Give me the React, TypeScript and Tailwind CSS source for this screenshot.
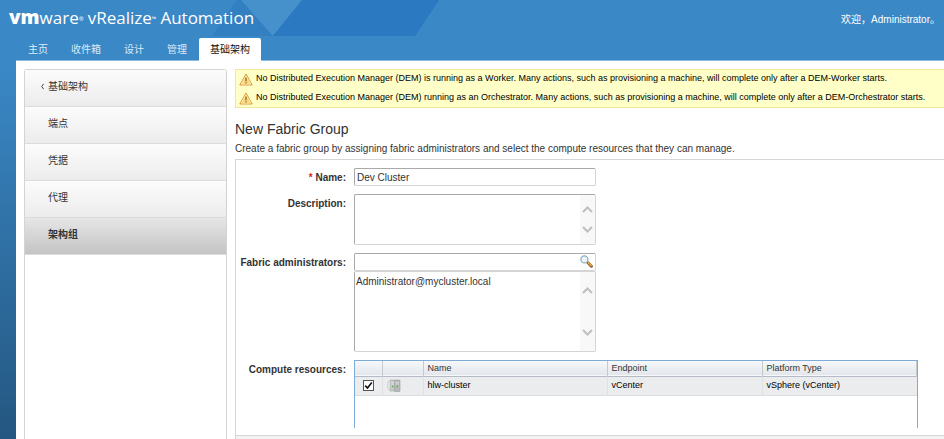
import React from "react";

const tabs = ["主页", "收件箱", "设计", "管理", "基础架构"];

const sideItems = ["基础架构", "端点", "凭据", "代理", "架构组"];

const warnings = [
  "No Distributed Execution Manager (DEM) is running as a Worker. Many actions, such as provisioning a machine, will complete only after a DEM-Worker starts.",
  "No Distributed Execution Manager (DEM) running as an Orchestrator. Many actions, such as provisioning a machine, will complete only after a DEM-Orchestrator starts.",
];

const field =
  "block w-full rounded-[2px] border border-[#d4d4d4] border-l-[#a9a9a9] bg-white text-[#333] outline-none";

function WarningIcon() {
  return (
    <svg className="h-[13px] w-[14px] shrink-0" viewBox="0 0 14 13" aria-hidden="true">
      <path d="M7 1 13.2 12H.8Z" fill="#fbd77c" stroke="#dd9a3c" strokeLinejoin="round" />
      <path d="M7 2.8 11.8 11H2.2Z" fill="none" stroke="#fff0c0" strokeWidth=".7" />
      <path d="M7 4.6v3.6M7 9.2v1.2" stroke="#8a5f1c" strokeWidth="1.2" />
    </svg>
  );
}

function SearchIcon() {
  return (
    <svg className="h-[13px] w-[13px]" viewBox="0 0 13 13" aria-hidden="true">
      <path d="m8 7.8 3.4 3.4" stroke="#7a5a35" strokeWidth="3" strokeLinecap="round" />
      <path d="m7.9 7.3 3.7 3.5" stroke="#f0a13c" strokeWidth="1.6" />
      <circle cx="4.4" cy="4.4" r="3.5" fill="#eaf6fb" stroke="#8caebc" strokeWidth="1.3" />
    </svg>
  );
}

function ClusterIcon() {
  return (
    <svg className="block h-[13px] w-[14px]" viewBox="0 0 14 13" aria-hidden="true">
      <path d="M4 .8C1.5 1.5.8 3.5.8 6.5s.8 5 3.2 5.7" fill="#f6f6f6" stroke="#c4c6c8" />
      <rect x="3" y="1" width="5" height="11" rx="1" fill="#c6c8ca" stroke="#a9abad" strokeWidth=".6" />
      <rect x="7.5" y="1" width="5.5" height="11.5" rx=".6" fill="#b6b8ba" stroke="#9b9d9f" strokeWidth=".6" />
      <path d="M4 3.5h3M4 5h3M8.5 3.5H12M8.5 5H12" stroke="#e2e4e5" strokeWidth=".7" />
      <path d="M5 7.5h1.5M9.5 7.5H11" stroke="#55b94a" strokeWidth="1.4" />
    </svg>
  );
}

function Chevron({ d }: { d: string }) {
  return (
    <svg className="h-[7px] w-[11px]" viewBox="0 0 11 7" aria-hidden="true">
      <path d={d} fill="none" stroke="#bfbfbf" strokeWidth="2" />
    </svg>
  );
}

function ScrollArrows({ className }: { className: string }) {
  return (
    <div
      className={`pointer-events-none absolute inset-y-px right-px flex w-[15px] flex-col items-center justify-between bg-[#f8f8f8] ${className}`}
    >
      <Chevron d="M1 6 5.5 1.5 10 6" />
      <Chevron d="M1 1 5.5 5.5 10 1" />
    </div>
  );
}

function Row({
  id,
  label,
  required,
  children,
}: {
  id: string;
  label: string;
  required?: boolean;
  children: React.ReactNode;
}) {
  return (
    <div className="flex items-start">
      <label
        htmlFor={id}
        className="w-[110px] shrink-0 pt-[3px] text-right text-[10px] leading-[13px] font-bold whitespace-nowrap text-[#333]"
      >
        {required && <span className="text-[#e02020]">* </span>}
        {label}
      </label>
      {children}
    </div>
  );
}

export default function App() {
  return (
    <div className="relative flex min-h-screen flex-col overflow-hidden bg-linear-to-b from-[#3a88c6] from-15% to-[#245781] font-['Liberation_Sans','Noto_Sans_CJK_SC',sans-serif]">
      <svg className="absolute top-0 left-0 h-9 w-[440px]" viewBox="0 0 440 36" aria-hidden="true">
        <path d="M237 0h5l31 36h-61Z" fill="#327fc2" />
        <path d="M241 0h61l-29 36Z" fill="#4690cb" />
        <path d="M302 0h137l-24 36H273Z" fill="#2a79c1" />
      </svg>

      <header className="relative">
        <div className="flex h-[38px] items-center justify-between pr-1 pl-[9px]">
          <div className="flex items-baseline pb-[3px] font-['Open_Sans',sans-serif] text-[17px] leading-6 text-white">
            <span className="text-[19px] font-extrabold">vm</span>
            <span>ware</span>
            <sup className="text-[6px]">®</sup>
            <span className="ml-1">vRealize</span>
            <sup className="text-[6px]">™</sup>
            <span className="ml-1">Automation</span>
          </div>
          <div className="text-[10px] text-white">欢迎，Administrator。</div>
        </div>
        <nav className="ml-4 flex h-[23px] items-stretch gap-px border-b border-[#8dbbe0] pl-px">
          {tabs.map((tab, i) => (
            <a
              key={tab}
              href="#"
              className={
                i === tabs.length - 1
                  ? "-mb-px flex items-center rounded-t-[2px] bg-white px-[11px] text-[10px] text-[#111]"
                  : "flex items-center px-[11px] text-[10px] text-[#dcebf7]"
              }
            >
              {tab}
            </a>
          ))}
        </nav>
      </header>

      <div className="relative ml-4 flex grow items-stretch bg-white pt-2 pl-2">
        <aside className="w-[203px] shrink-0 rounded-t-[3px] border-x border-t border-[#d4d4d4]">
          {sideItems.map((item, i) => (
            <a
              key={item}
              href="#"
              className={
                i === sideItems.length - 1
                  ? "flex h-[37px] items-center border-b border-[#dcdcdc] bg-linear-to-b from-[#e6e6e6] to-[#c4c4c4] pb-1 pl-[23px] text-[10px] font-bold text-[#333]"
                  : "flex h-[37px] items-center border-b border-[#dcdcdc] bg-linear-to-b from-[#fcfcfc] to-[#ececec] pb-1 pl-[23px] text-[10px] text-[#333]"
              }
            >
              {i === 0 && (
                <svg className="mr-1 -ml-[7px] h-[7px] w-[3px]" viewBox="0 0 3 7" aria-hidden="true">
                  <path d="M2.7.8.7 3.5l2 2.7" fill="none" stroke="#444" />
                </svg>
              )}
              {item}
            </a>
          ))}
        </aside>

        <main className="ml-2 flex min-w-0 grow flex-col">
          <div
            className="flex flex-col gap-[5px] border border-r-0 border-[#f1e79c] bg-[#ffffc8] px-[3px] py-0.5"
            role="alert"
          >
            {warnings.map((text) => (
              <div key={text} className="flex h-[14px] items-center gap-[3px] text-[9px] whitespace-nowrap text-black">
                <WarningIcon />
                {text}
              </div>
            ))}
          </div>

          <h1 className="mt-3 text-[14px] leading-[18px] text-[#333]">New Fabric Group</h1>
          <p className="mt-1 text-[10px] leading-[14px] whitespace-nowrap text-[#333]">
            Create a fabric group by assigning fabric administrators and select the compute resources that they can manage.
          </p>

          <form className="mt-[3px] flex grow flex-col border-t border-l border-[#d6d6d6]">
            <div className="flex grow flex-col gap-2 pt-2 pr-[26px]">
              <Row id="name" label="Name:" required>
                <div className="ml-2 w-[242px]">
                  <input
                    id="name"
                    defaultValue="Dev Cluster"
                    className={`${field} h-[18px] border-t-[#a9a9a9] px-0.5 text-[10px]`}
                  />
                </div>
              </Row>
              <Row id="description" label="Description:">
                <div className="relative ml-2 w-[242px]">
                  <textarea
                    id="description"
                    className={`${field} h-[51px] resize-none border-t-[#a9a9a9] px-0.5 text-[10px]`}
                  />
                  <ScrollArrows className="py-[11px]" />
                </div>
              </Row>
              <Row id="admins" label="Fabric administrators:">
                <div className="ml-2 w-[242px]">
                  <div className="relative">
                    <input
                      id="admins"
                      className={`${field} h-[18px] border-t-[#a9a9a9] pr-5 pl-0.5 text-[10px]`}
                    />
                    <button type="button" aria-label="Search" className="absolute top-0.5 right-[3px]">
                      <SearchIcon />
                    </button>
                  </div>
                  <div className="relative">
                    <textarea
                      aria-label="Selected administrators"
                      defaultValue="Administrator@mycluster.local"
                      className={`${field} h-[81px] resize-none px-px py-[3px] text-[10px] leading-[13px]`}
                    />
                    <ScrollArrows className="py-[15px]" />
                  </div>
                </div>
              </Row>
              <Row id="resource-0" label="Compute resources:">
                <div className="ml-2 h-[68px] min-w-0 grow border border-b-0 border-[#7eacd8]">
                  <table className="w-full table-fixed border-collapse text-left text-[9px]">
                    <colgroup>
                      <col className="w-[27px]" />
                      <col className="w-[41px]" />
                      <col className="w-[184px]" />
                      <col className="w-[155px]" />
                      <col />
                    </colgroup>
                    <thead>
                      <tr className="h-[15px] border-b border-[#b4bbc6] bg-linear-to-b from-[#f6f8fa] to-[#e3e6eb] text-[#333]">
                        <th className="border-r border-[#c5cad2] p-0" />
                        <th className="border-r border-[#c5cad2] p-0" />
                        <th className="border-r border-[#c5cad2] px-1 py-0 font-normal">Name</th>
                        <th className="border-r border-[#c5cad2] px-1 py-0 font-normal">Endpoint</th>
                        <th className="border-r border-[#c5cad2] px-1 py-0 font-normal">Platform Type</th>
                      </tr>
                    </thead>
                    <tbody>
                      <tr className="h-[19px] border-b border-[#dcdee4] bg-[#ebecee] text-black">
                        <td className="border-r border-[#e0e1e4] p-0">
                          <label className="relative mx-auto block h-[11px] w-[11px]">
                            <input
                              id="resource-0"
                              type="checkbox"
                              defaultChecked
                              aria-label="hlw-cluster"
                              className="peer block h-[11px] w-[11px] appearance-none border border-[#555] bg-white"
                            />
                            <svg
                              className="pointer-events-none absolute inset-0 hidden h-[11px] w-[11px] peer-checked:block"
                              viewBox="0 0 11 11"
                              aria-hidden="true"
                            >
                              <path d="m2.2 5.6 2.3 2.5 4.3-5.6" fill="none" stroke="#111" strokeWidth="1.6" />
                            </svg>
                          </label>
                        </td>
                        <td className="border-r border-[#e0e1e4] py-0 pr-0 pl-1">
                          <ClusterIcon />
                        </td>
                        <td className="border-r border-[#e0e1e4] px-1 py-0">hlw-cluster</td>
                        <td className="border-r border-[#e0e1e4] px-1 py-0">vCenter</td>
                        <td className="px-1 py-0">vSphere (vCenter)</td>
                      </tr>
                    </tbody>
                  </table>
                </div>
              </Row>
            </div>
            <div className="h-1 border-t border-[#d6d6d6] bg-[#f3f3f3]" />
          </form>
        </main>
      </div>
    </div>
  );
}
